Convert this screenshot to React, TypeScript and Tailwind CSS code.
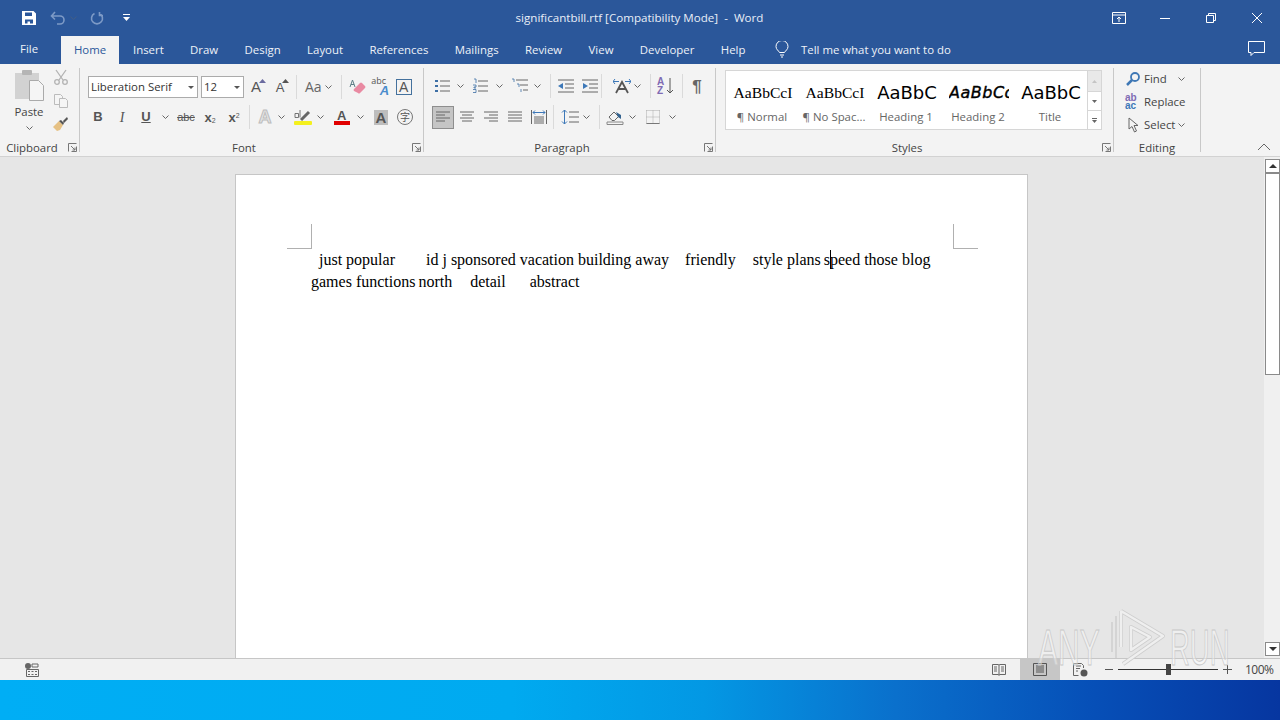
import clsx from "clsx";
import type { ReactNode } from "react";

const UI = "font-['Open_Sans','Noto_Sans',sans-serif]";

const Chevron = ({ className = "" }: { className?: string }) => (
  <svg width="7" height="4" viewBox="0 0 7 4" className={className} fill="none" stroke="#666" strokeWidth="1">
    <path d="M.5.5 3.5 3.5 6.5.5" />
  </svg>
);

const Launcher = () => (
  <svg width="9" height="9" viewBox="0 0 9 9" fill="none" stroke="#777" strokeWidth="1">
    <path d="M.5 8.5V.5h8M8.5 3.500v5h-5M3 3l4 4M7 4.500V7H4.500" />
  </svg>
);

const Btn = ({ className = "w-6", children }: { className?: string; children: ReactNode }) => (
  <div className={clsx("flex h-6 shrink-0 items-center justify-center", className)}>{children}</div>
);

const Drop = ({ className = "w-[14px]" }: { className?: string }) => (
  <Btn className={className}>
    <Chevron />
  </Btn>
);

const Sep = ({ className = "mx-[2px]" }: { className?: string }) => (
  <div className={clsx("h-6 w-px shrink-0 bg-[#dadada]", className)} />
);

const Group = ({
  label,
  launcher,
  className,
  children,
}: {
  label: string;
  launcher?: boolean;
  className: string;
  children: ReactNode;
}) => (
  <>
    <div className={clsx("flex h-[88px] shrink-0 flex-col", className)}>
      <div className="flex-1">{children}</div>
      <div className={clsx("relative h-4 text-center text-[11.4px] leading-4 text-[#444]", launcher && "pr-[15px]")}>
        {label}
        {launcher && (
          <span className="absolute right-[2px] top-[3px] flex">
            <Launcher />
          </span>
        )}
      </div>
    </div>
    <div className="h-[84px] w-px shrink-0 bg-[#c8c8c8]" />
  </>
);

const Lines = ({ d, stroke = "#666" }: { d: string; stroke?: string }) => (
  <svg width="16" height="16" viewBox="0 0 16 16" fill="none" stroke={stroke}>
    <path d={d} />
  </svg>
);

const LetterA = ({ size, arrow }: { size: string; arrow: string }) => (
  <span className="relative font-['Liberation_Sans',sans-serif] leading-none text-[#555]">
    <span className={size}>A</span>
    <svg width="7" height="4" viewBox="0 0 7 4" className="absolute -right-[5px] top-0">
      <path d="M3.5 0 7 4H0z" fill={arrow} />
    </svg>
  </span>
);

const FontRowOne = () => (
  <div className="flex h-[22px] items-center pl-2">
    <div className="flex h-[22px] w-[110px] items-center justify-between border border-[#ababab] bg-white pl-[2px] pr-[3px] text-[11.4px] text-[#333]">
      Liberation Serif
      <svg width="6" height="3" viewBox="0 0 6 3">
        <path d="M0 0h6L3 3z" fill="#555" />
      </svg>
    </div>
    <div className="ml-[3px] flex h-[22px] w-[43px] items-center justify-between border border-[#ababab] bg-white pl-[2px] pr-[3px] text-[11.4px] text-[#333]">
      12
      <svg width="6" height="3" viewBox="0 0 6 3">
        <path d="M0 0h6L3 3z" fill="#555" />
      </svg>
    </div>
    <Btn className="w-6">
      <LetterA size="text-[15px]" arrow="#6b6b9f" />
    </Btn>
    <Btn className="w-6">
      <LetterA size="text-[13px]" arrow="#555" />
    </Btn>
    <Sep className="ml-[4px] mr-[8px]" />
    <span className="text-[14px] leading-none text-[#666]">Aa</span>
    <Chevron className="ml-[3px]" />
    <Sep className="ml-[9px] mr-[3px]" />
    <Btn>
      <svg width="18" height="18" viewBox="0 0 18 18">
        <path d="M6 11 12 5q1-1 2 0l3 3q1 1 0 2l-5 5q-1 1-2 0l-4-2q-1-1 0-2z" fill="#e98aa2" />
        <path d="M2 9 4.500 2 7 9M3 6.500h3" stroke="#5c7f86" fill="none" />
      </svg>
    </Btn>
    <Btn className="w-[23px]">
      <span className="flex h-5 w-[18px] flex-col">
        <span className="h-2 text-[9px] leading-2 text-[#555]">abc</span>
        <span className="h-3 self-end font-['Liberation_Sans',sans-serif] text-[13px] font-bold italic leading-3 text-[#4a8ccc]">A</span>
      </span>
    </Btn>
    <Btn>
      <span className="flex h-4 w-4 items-center justify-center border border-[#44719d] font-['Liberation_Sans',sans-serif] text-[14px] leading-none text-[#555]">A</span>
    </Btn>
  </div>
);

const FontRowTwo = () => (
  <div className="mt-[7px] flex items-center pl-[6px] font-['Liberation_Sans',sans-serif] text-[#555]">
    <Btn><span className="text-[13px] font-bold">B</span></Btn>
    <Btn><span className="font-['Liberation_Serif',serif] text-[14px] italic">I</span></Btn>
    <Btn><span className="text-[13px] font-bold underline">U</span></Btn>
    <Drop />
    <Btn className="ml-[2px] w-6"><span className="text-[11px] line-through">abc</span></Btn>
    <Btn>
      <span className="text-[13px] font-bold leading-none">x<sub className="text-[7px] font-normal">2</sub></span>
    </Btn>
    <Btn>
      <span className="text-[13px] font-bold leading-none">x<sup className="text-[7px] font-normal">2</sup></span>
    </Btn>
    <Sep className="ml-[3px] mr-[3px]" />
    <Btn>
      <span className="font-['Liberation_Sans',sans-serif] text-[18px] font-bold leading-none text-[#e4e4e4] [-webkit-text-stroke:1px_#bdbdbd]">A</span>
    </Btn>
    <Drop className="w-[8px]" />
    <Btn className="ml-[6px] w-[24px]">
      <svg width="18" height="16" viewBox="0 0 18 16">
        <rect x="0" y="12" width="18" height="4" rx="1" fill="#f4f01e" />
        <path d="m7 11 8-8" stroke="#666" strokeWidth="3" />
        <path d="M1 4.500h3.500v4H1zM6 1v7.500" stroke="#666" fill="none" strokeWidth=".9" />
      </svg>
    </Btn>
    <Drop className="w-[10px]" />
    <Btn className="ml-[5px] w-[24px]">
      <span className="relative block h-4 w-4">
        <span className="absolute left-[3px] top-0 text-[13px] font-semibold leading-none">A</span>
        <span className="absolute bottom-0 left-0 h-1 w-4 bg-[#e00000]" />
      </span>
    </Btn>
    <Drop className="ml-[1px] w-[10px]" />
    <Btn className="ml-[4px] w-6">
      <span className="flex h-[15px] w-[14px] items-center justify-center bg-[#bdbdbd] text-[15px] font-bold leading-none">A</span>
    </Btn>
    <Btn>
      <span className="flex h-4 w-4 items-center justify-center rounded-full border border-[#777] font-['Noto_Sans_CJK_SC',sans-serif] text-[10px] leading-none">字</span>
    </Btn>
  </div>
);

const ParagraphRowOne = () => (
  <div className="flex items-center pl-[7px] pt-[6px]">
    <Btn>
      <svg width="16" height="16" viewBox="0 0 16 16">
        <path d="M5 3h10M5 8h10M5 13h10" stroke="#666" />
        <path d="M0 2h3v2H0zM0 7h3v2H0zM0 12h3v2H0z" fill="#3d6fa5" />
      </svg>
    </Btn>
    <Drop className="w-[10px]" />
    <Btn className="ml-1 w-6">
      <svg width="16" height="16" viewBox="0 0 16 16">
        <path d="M5 3h10M5 8h10M5 13h10" stroke="#666" />
        <path d="M1 1h2v4M0 7h3v2H1v1h2M0 11.500h3v3H0" stroke="#3d6fa5" fill="none" strokeWidth=".8" />
      </svg>
    </Btn>
    <Drop className="w-[12px]" />
    <Btn className="ml-1 w-6">
      <svg width="18" height="16" viewBox="0 0 18 16">
        <path d="M4 2h12M8 7h8M11 12h5" stroke="#666" />
        <path d="M0 1h2v3M5 6h2v3M9 11v3" stroke="#3d6fa5" fill="none" strokeWidth=".8" />
      </svg>
    </Btn>
    <Drop className="w-[8px]" />
    <Sep className="ml-[9px] mr-[3px]" />
    <Btn>
      <svg width="18" height="16" viewBox="0 0 18 16">
        <path d="M1 2h16M8 6h9M8 10h9M1 14h16" stroke="#666" />
        <path d="M6 5v6L1 8z" fill="#3d78b8" />
      </svg>
    </Btn>
    <Btn>
      <svg width="18" height="16" viewBox="0 0 18 16">
        <path d="M1 2h16M8 6h9M8 10h9M1 14h16" stroke="#666" />
        <path d="M2 5v6l5-3z" fill="#3d78b8" />
      </svg>
    </Btn>
    <Sep className="ml-[-1px] mr-[11px]" />
    <Btn className="w-[18px]">
      <svg width="18" height="16" viewBox="0 0 18 16" fill="none">
        <path d="M3 15 9 4l6 11M5.500 11h7" stroke="#555" strokeWidth="1.800" />
        <path d="M0 3.500h6M2 1 0 3.500 2 6M12 3.500h6M16 1l2 2.500L16 6" stroke="#3d78b8" />
      </svg>
    </Btn>
    <Drop className="w-[12px]" />
    <Sep className="ml-[7px] mr-[3px]" />
    <Btn>
      <span className="relative block h-[18px] w-[18px] font-['Liberation_Sans',sans-serif] text-[10px] font-bold leading-[9px] text-[#7f6bb3]">
        A<br />Z
        <svg width="8" height="16" viewBox="0 0 8 16" className="absolute right-[1px] top-[1px]">
          <path d="M4 0v15M1 12l3 3 3-3" stroke="#555" fill="none" />
        </svg>
      </span>
    </Btn>
    <Sep className="ml-[4px] mr-[2px]" />
    <Btn className="w-[24px]">
      <span className="font-['Liberation_Sans',sans-serif] text-[17px] font-bold leading-none text-[#666]">¶</span>
    </Btn>
  </div>
);

const ParagraphRowTwo = () => (
  <div className="mt-[7px] flex items-center pl-[8px]">
    <div className="flex h-[23px] w-[22px] items-center justify-center border border-[#8e8e8e] bg-[#c5c5c5]">
      <Lines d="M1 3h14M1 6h9M1 9h14M1 12h9" />
    </div>
    <Btn className="ml-[1px] w-6"><Lines d="M1 3h14M3 6h10M1 9h14M3 12h10" /></Btn>
    <Btn><Lines d="M1 3h14M6 6h9M1 9h14M6 12h9" /></Btn>
    <Btn><Lines d="M1 3h14M1 6h14M1 9h14M1 12h14" /></Btn>
    <Btn>
      <svg width="16" height="16" viewBox="0 0 16 16" fill="none">
        <path d="M.5 1v14M15.500 1v14M3 8h10M3 10h10M3 12h10M3 14h10" stroke="#666" />
        <path d="M2 3.500h12M4 1.500l-2 2 2 2M12 1.500l2 2-2 2" stroke="#3d78b8" />
      </svg>
    </Btn>
    <Sep className="ml-[2px] mr-[6px]" />
    <Btn className="w-[20px]">
      <svg width="18" height="16" viewBox="0 0 18 16" fill="none">
        <path d="M8 3h10M8 8h10M8 13h10" stroke="#666" />
        <path d="M3.500 1v14M1 3.500l2.500-2.500L6 3.500M1 12.500 3.500 15 6 12.500" stroke="#3d78b8" />
      </svg>
    </Btn>
    <Drop className="ml-[1px] w-[10px]" />
    <Sep className="ml-[8px] mr-[3px]" />
    <Btn>
      <svg width="18" height="16" viewBox="0 0 18 16" fill="none">
        <path d="M1 15.500h16V13H1z" stroke="#888" />
        <path d="M3 8 8 3l4.500 4.500-4 4H6z" stroke="#666" />
        <path d="m10 3 5 3v4l-3-2z" fill="#33628f" />
      </svg>
    </Btn>
    <Drop className="ml-[1px] w-[9px]" />
    <Btn className="ml-1 w-6">
      <svg width="14" height="14" viewBox="0 0 14 14" fill="none" stroke="#aaa" strokeDasharray="1 1">
        <path d="M.5.500h13M.5 7h13M.5.500v13M7 .5v13M13.500.5v13" />
        <path d="M.5 13.500h13" strokeDasharray="none" stroke="#777" />
      </svg>
    </Btn>
    <Drop className="ml-[1px] w-[12px]" />
  </div>
);

const styleItems = [
  { sample: "AaBbCcI", label: "¶ Normal", cls: "font-['Liberation_Serif',serif] text-[15.600px]" },
  { sample: "AaBbCcI", label: "¶ No Spac...", cls: "font-['Liberation_Serif',serif] text-[15.600px]" },
  { sample: "AaBbC", label: "Heading 1", cls: "font-['DejaVu_Sans',sans-serif] text-[18px]" },
  { sample: "AaBbCc", label: "Heading 2", cls: "font-['DejaVu_Sans',sans-serif] text-[16px] italic tracking-[0.5px] [-webkit-text-stroke:0.4px_black]" },
  { sample: "AaBbC", label: "Title", cls: "font-['DejaVu_Sans',sans-serif] text-[18px]" },
];

const StylesGallery = () => (
  <div className="ml-[9px] mt-[2px] flex h-[60px] w-[377px] border border-[#d6d6d6] bg-white">
    <div className="flex flex-1">
      {styleItems.map((s) => (
        <div key={s.label} className="flex w-[72px] flex-col items-center overflow-hidden">
          <div className={clsx("ml-[2px] mt-[9px] h-[26px] w-[60px] overflow-hidden whitespace-nowrap text-center leading-[26px] text-black", s.cls)}>
            {s.sample}
          </div>
          <div className="mt-[2px] whitespace-nowrap text-[11.4px] leading-[18px] text-[#666]">{s.label}</div>
        </div>
      ))}
    </div>
    <div className="flex w-[14px] shrink-0 flex-col border-l border-[#d6d6d6] text-[#555]">
      <div className="flex h-[21px] items-center justify-center border-b border-[#d6d6d6] bg-[#e9e9e9]">
        <svg width="5" height="3" viewBox="0 0 5 3"><path d="M2.500 0 5 3H0z" fill="#c4c4c4" /></svg>
      </div>
      <div className="flex h-[19px] items-center justify-center border-b border-[#d6d6d6]">
        <svg width="5" height="3" viewBox="0 0 5 3"><path d="M2.500 3 5 0H0z" fill="#666" /></svg>
      </div>
      <div className="flex flex-1 flex-col items-center justify-center gap-[1px]">
        <div className="h-px w-[5px] bg-[#666]" />
        <svg width="5" height="3" viewBox="0 0 5 3"><path d="M2.500 3 5 0H0z" fill="#666" /></svg>
      </div>
    </div>
  </div>
);

const Editing = () => (
  <div className="-mt-px flex flex-col pl-[11px] text-[11.4px] text-[#444]">
    <div className="flex h-[23px] items-center">
      <svg width="16" height="16" viewBox="0 0 16 16" fill="none">
        <circle cx="10" cy="6" r="4" stroke="#3f78b5" strokeWidth="1.800" />
        <path d="M7 9 2 14" stroke="#3f78b5" strokeWidth="2.500" />
      </svg>
      <span className="ml-[3px]">Find</span>
      <Chevron className="ml-[11px]" />
    </div>
    <div className="flex h-[23px] items-center">
      <span className="flex w-[19px] flex-col font-['Liberation_Sans',sans-serif] text-[10px] font-bold leading-2">
        <span className="h-2 text-[#7f6bb3]">ab</span>
        <span className="h-2 text-[#3d78b8]">ac</span>
      </span>
      <span>Replace</span>
    </div>
    <div className="flex h-[23px] items-center">
      <svg width="12" height="16" viewBox="0 0 12 16" className="ml-[3px] mr-[4px]" fill="none" stroke="#666">
        <path d="M1 1v11l3-2.500L6.500 15l2-1L6 8.500h4z" />
      </svg>
      <span>Select</span>
      <Chevron className="ml-[3px]" />
    </div>
  </div>
);

const Ribbon = () => (
  <div className="relative flex h-[93px] shrink-0 items-start border-b border-[#d2d2d2] bg-[#f3f3f3] pt-1">
    <Group label="Clipboard" launcher className="w-[79px]">
      <div className="flex pl-[14px] pt-[2px]">
        <div className="flex w-[30px] flex-col items-center">
          <svg width="32" height="31" viewBox="0 0 32 31" className="shrink-0">
            <rect x="2" y="3" width="24" height="26" fill="#d2d2d2" />
            <rect x="9" y="0" width="10" height="5" rx="1" fill="#b5b5b5" />
            <path d="M16.500 10.500h9l5 5v15h-14z" fill="#f5f5f5" stroke="#aaa" />
          </svg>
          <span className="mt-[3px] text-[11.4px] leading-4 text-[#444]">Paste</span>
          <Chevron className="mt-[6px]" />
        </div>
        <div className="ml-2 flex flex-col items-center">
          <svg width="16" height="16" viewBox="0 0 16 16" className="-mt-px" fill="none" stroke="#b3b3b3" strokeWidth="1.300">
            <path d="M3 1 10 11M13 1 6 11" />
            <circle cx="4" cy="13" r="2.300" />
            <circle cx="12" cy="13" r="2.300" />
          </svg>
          <svg width="16" height="16" viewBox="0 0 16 16" className="mt-2" fill="#f5f5f5" stroke="#bbb">
            <path d="M1.500 1.500h6l2 2v8h-8z" />
            <path d="M6.500 5.500h6l2 2v7h-8z" />
          </svg>
          <svg width="17" height="16" viewBox="0 0 17 16" className="mt-[7px]">
            <path d="M1 11 7 5l4 4-3 5-3 1z" fill="#e6c184" />
            <path d="m7 5 2-1 3 3-1 2zM11 5l4-4 1 2-4 4z" fill="#555" />
          </svg>
        </div>
      </div>
    </Group>
    <Group label="Font" launcher className="w-[343px]">
      <div className="pt-2">
        <FontRowOne />
        <FontRowTwo />
      </div>
    </Group>
    <Group label="Paragraph" launcher className="w-[291px]">
      <ParagraphRowOne />
      <ParagraphRowTwo />
    </Group>
    <Group label="Styles" launcher className="w-[397px]">
      <StylesGallery />
    </Group>
    <Group label="Editing" className="w-[86px]">
      <Editing />
    </Group>
    <svg width="14" height="8" viewBox="0 0 14 8" className="absolute right-[9px] top-[79px]" fill="none" stroke="#666">
      <path d="M1 7 7 1l6 6" />
    </svg>
  </div>
);

const TitleBar = () => (
  <div className="relative flex h-9 shrink-0 items-center bg-[#2b579a] text-white">
    <svg width="16" height="16" viewBox="0 0 16 16" className="ml-[21px]" fill="white">
      <path fillRule="evenodd" d="M1 1h11.500L15 3.500V15H1zM4 2.500V6h7V2.500zM4 9.500v4h2.500v-2H9v2h3v-4z" />
    </svg>
    <svg width="16" height="14" viewBox="0 0 16 14" className="ml-[13px]" fill="none" stroke="#7d9ac6" strokeWidth="1.600">
      <path d="M2 5h8a4 4 0 0 1 0 8H7M5 1 1.500 5 5 8.500" />
    </svg>
    <Chevron className="ml-[4px] opacity-40" />
    <svg width="14" height="14" viewBox="0 0 14 14" className="ml-[13px]" fill="none" stroke="#7d9ac6" strokeWidth="1.600">
      <path d="M9.500 2.500a5.500 5.500 0 1 1-5 0M9.500 1v3.500H13" />
    </svg>
    <svg width="7" height="8" viewBox="0 0 7 8" className="ml-[19px]" fill="white">
      <path d="M0 0h7v1H0zM0 3h7L3.500 7z" />
    </svg>
    <div className="absolute inset-x-0 top-0 flex h-9 justify-center pr-[1px] text-[11.6px] leading-9 text-[#e8eef7]">
      significantbill.rtf [Compatibility Mode]&nbsp; -&nbsp; Word
    </div>
    <div className="absolute right-0 top-0 flex h-9 items-center">
      <Btn className="w-[46px]">
        <svg width="14" height="12" viewBox="0 0 14 12" fill="none" stroke="white">
          <path d="M.5.500h13v11H.5zM.5 3h13M7 10V5M5 7l2-2 2 2" />
        </svg>
      </Btn>
      <Btn className="w-[46px]">
        <div className="h-px w-[10px] bg-white" />
      </Btn>
      <Btn className="w-[46px]">
        <svg width="10" height="10" viewBox="0 0 10 10" fill="none" stroke="white">
          <path d="M.5 2.500h7v7h-7zM2.500 2.500v-2h7v7h-2" />
        </svg>
      </Btn>
      <Btn className="w-[46px]">
        <svg width="12" height="12" viewBox="0 0 12 12" fill="none" stroke="white">
          <path d="m1 1 10 10M11 1 1 11" />
        </svg>
      </Btn>
    </div>
  </div>
);

const tabs = ["Insert", "Draw", "Design", "Layout", "References", "Mailings", "Review", "View", "Developer", "Help"];

const TabBar = () => (
  <div className="relative flex h-7 shrink-0 items-end bg-[#2b579a] text-[11.4px] text-[#eef2f8]">
    <div className="flex h-7 w-[61px] items-center pb-[2px] pl-5">File</div>
    <div className="flex h-7 w-[58px] items-center justify-center bg-[#f3f3f3] text-[#2b579a]">Home</div>
    <div className="flex h-7 gap-[26.4px] pl-[14px] leading-[27px]">
      {tabs.map((t) => (
        <span key={t}>{t}</span>
      ))}
    </div>
    <div className="absolute left-[775px] top-0 flex h-7 items-center pb-[1px]">
      <svg width="14" height="17" viewBox="0 0 14 17" fill="none" stroke="white">
        <path d="M4.500 11.500C3.500 9.500 1 8.500 1 5.500a6 6 0 0 1 12 0c0 3-2.500 4-3.500 6zM5 14h4M6 16h2" />
      </svg>
      <span className="ml-[12px]">Tell me what you want to do</span>
    </div>
    <svg width="17" height="15" viewBox="0 0 17 15" className="absolute right-[15px] top-[5px]" fill="none" stroke="white">
      <path d="M.5.500h16v11H6l-3 3v-3H.5z" />
    </svg>
  </div>
);

const Page = () => (
  <div className="ml-[235px] mt-[17px] h-[600px] w-[793px] shrink-0 border border-[#c6c6c6] bg-white pt-[49px] font-['Liberation_Serif',serif] text-base text-black">
    <div className="flex justify-between pl-[51px] pr-[49px]">
      <div className="h-[25px] w-[25px] border-b border-r border-[#b0b0b0]" />
      <div className="h-[25px] w-[25px] border-b border-l border-[#b0b0b0]" />
    </div>
    <div className="whitespace-pre pl-[75px] leading-[22px]">
      <div className="flex">
        <span className="ml-2">just popular</span>
        <span className="ml-[31px]">id j sponsored vacation building away</span>
        <span className="ml-4">friendly</span>
        <span className="ml-[17px]">style plans</span>
        <span className="ml-[3px]">s</span>
        <span className="relative">
          <span className="absolute left-0 top-[1px] h-[19px] w-px bg-black" />
          peed those blog
        </span>
      </div>
      <div className="flex">
        <span>games functions</span>
        <span className="ml-[3px]">north</span>
        <span className="ml-[18px]">detail</span>
        <span className="ml-6">abstract</span>
      </div>
    </div>
  </div>
);

const ScrollArrow = ({ up }: { up?: boolean }) => (
  <div className="flex h-[14px] w-[15px] items-center justify-center border border-[#8a8a8a] bg-white">
    <svg width="8" height="4" viewBox="0 0 8 4">
      <path d={up ? "M4 0l4 4H0z" : "M4 4l4-4H0z"} fill="#333" />
    </svg>
  </div>
);

const Scrollbar = () => (
  <div className="flex w-4 shrink-0 flex-col items-end bg-[#f0f0f0] pt-[2px]">
    <ScrollArrow up />
    <div className="h-[202px] w-[15px] border border-[#8a8a8a] bg-white" />
    <div className="flex-1" />
    <div className="mb-[2px]">
      <ScrollArrow />
    </div>
  </div>
);

const StatusBar = () => (
  <div className="flex h-[22px] shrink-0 items-center border-t border-[#c6c6c6] bg-[#f1f1f1] text-[#555]">
    <svg width="14" height="14" viewBox="0 0 14 14" className="ml-[25px]" fill="#666">
      <circle cx="3" cy="3" r="3" />
      <path d="M7 1h6v3H7zM1.500 6.500h12v7h-12z" fill="none" stroke="#666" />
      <path d="M3 8h2v1H3zM6.500 8h2v1h-2zM10 8h2v1h-2zM3 11h2v1H3zM6.500 11h2v1h-2zM10 11h2v1h-2z" />
    </svg>
    <div className="ml-auto flex items-center">
      <svg width="14" height="13" viewBox="0 0 14 13" fill="none" stroke="#666">
        <path d="M.5 1.500h6l.5 1 .5-1h6v10h-6l-.5 1-.5-1h-6zM7 2.500v9M2 4h3M2 6h3M2 8h3M9 4h3M9 6h3M9 8h3" />
      </svg>
      <div className="ml-[14px] flex h-[21px] w-10 items-center justify-center bg-[#c6c6c6]">
        <svg width="14" height="13" viewBox="0 0 14 13" fill="none" stroke="#555">
          <path d="M.5.500h13v12H.5zM3 3h8M3 5h8M3 7h8M3 9h8" />
        </svg>
      </div>
      <svg width="15" height="14" viewBox="0 0 15 14" className="ml-[13px]" fill="none" stroke="#666">
        <path d="M.5.500h8l2 2V5M.5.500v12h5M3 3h5M3 5.500h4M3 8h2" />
        <circle cx="11" cy="10" r="3.500" fill="#555" stroke="none" />
      </svg>
      <div className="ml-[17px] h-px w-[8px] bg-[#555]" />
      <div className="relative ml-[5px] h-px w-[100px] bg-[#333]">
        <div className="absolute left-[48px] top-[-5px] h-[11px] w-[5px] bg-[#444]" />
      </div>
      <svg width="9" height="9" viewBox="0 0 9 9" className="ml-[5px]" stroke="#555">
        <path d="M0 4.500h9M4.500 0v9" />
      </svg>
      <span className="ml-[13px] mr-[7px] w-[28px] text-xs tracking-[-0.5px] text-[#444]">100%</span>
    </div>
  </div>
);

const Watermark = () => (
  <div className="pointer-events-none absolute left-[1038px] top-[608px] flex h-[66px] w-[196px] items-center font-['Liberation_Sans',sans-serif] text-[50px] leading-none text-white/40 [-webkit-text-stroke:1px_#c8c8c8]">
    <span className="w-[64px] origin-left scale-x-[0.6] pt-[14px]">ANY</span>
    <svg width="62" height="66" viewBox="0 0 62 66" className="ml-[6px] shrink-0" fill="none">
      <path d="M4 14v30M8 8v42" stroke="#cecece" strokeWidth="1.500" />
      <path d="M13 3 55 28 15 56M13 3v36M23 19l19 10-19 13z" stroke="#cecece" strokeWidth="4" strokeLinejoin="round" />
      <path d="M13 3 55 28 15 56M13 3v36M23 19l19 10-19 13z" stroke="#efefef" strokeWidth="2.500" strokeLinejoin="round" />
    </svg>
    <span className="w-[62px] origin-left scale-x-[0.55] pt-[14px]">RUN</span>
  </div>
);

export default function App() {
  return (
    <div className={clsx("relative flex h-[720px] w-[1280px] flex-col overflow-hidden bg-[#e6e6e6]", UI)}>
      <TitleBar />
      <TabBar />
      <Ribbon />
      <div className="flex min-h-0 flex-1">
        <div className="min-w-0 flex-1 overflow-hidden">
          <Page />
        </div>
        <Scrollbar />
      </div>
      <StatusBar />
      <div className="h-10 shrink-0 bg-[linear-gradient(90deg,#00aef5_0%,#00aaf0_40%,#0398e4_55%,#0a70cc_70%,#0650b8_85%,#0636a0_100%)]" />
      <Watermark />
    </div>
  );
}
